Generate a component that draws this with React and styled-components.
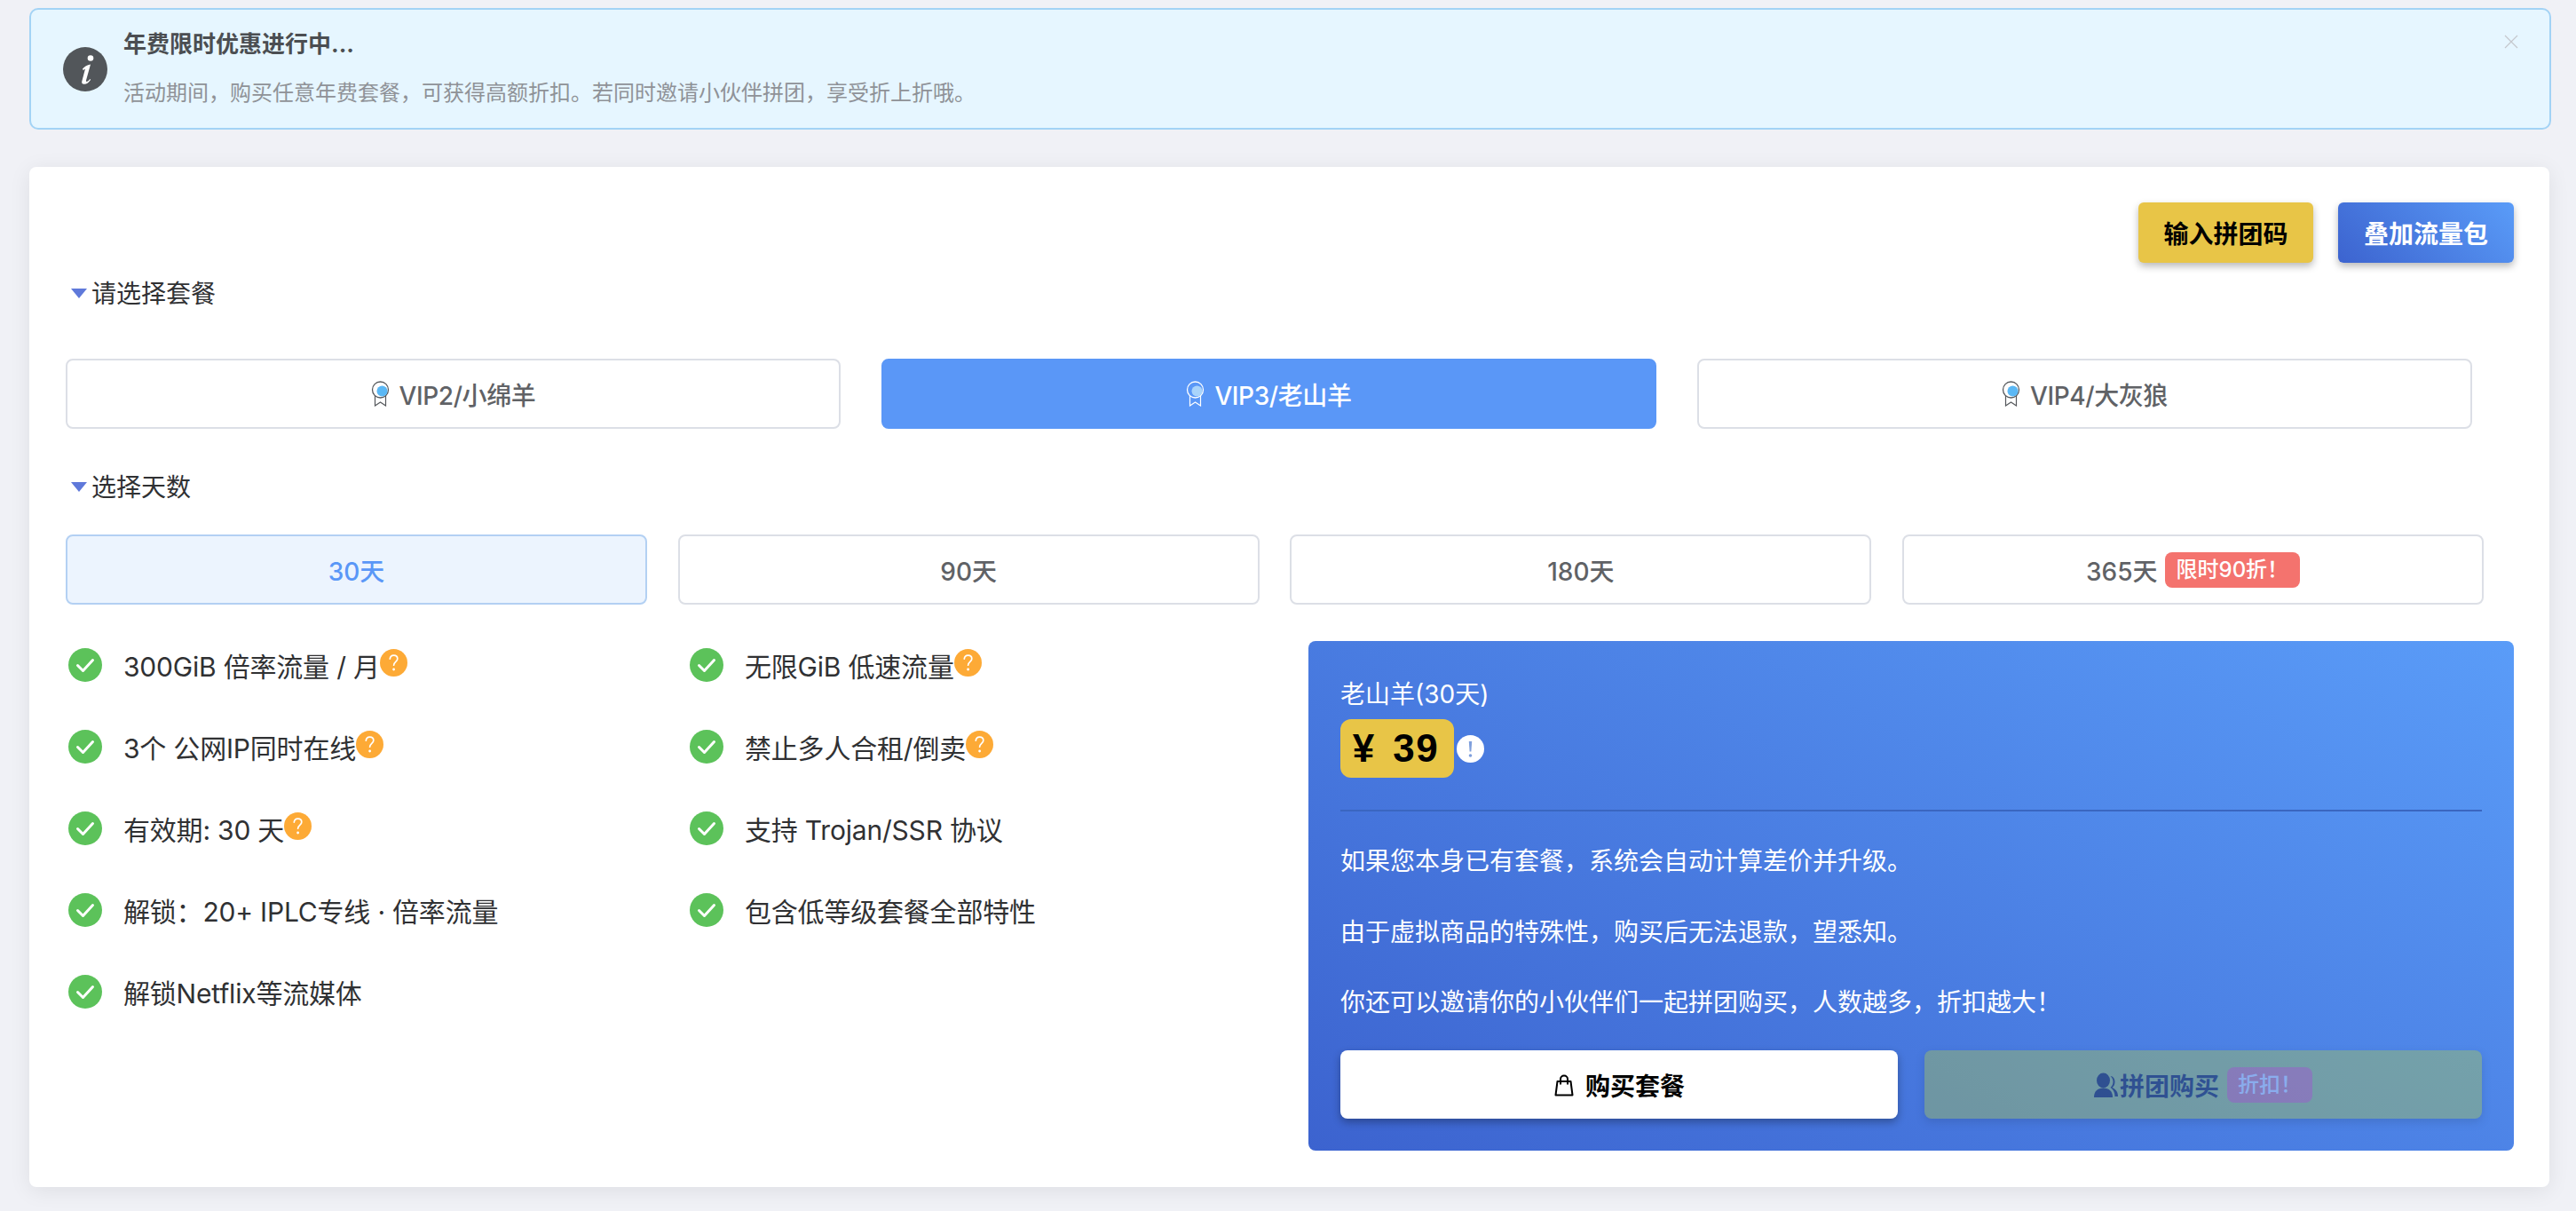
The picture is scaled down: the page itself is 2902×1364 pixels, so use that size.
import React from "react";
import styled, { createGlobalStyle } from "styled-components";

const Global = createGlobalStyle`
  html, body { margin: 0; padding: 0; background: #f0f1f6; }
  body { font-family: Inter, "Noto Sans CJK SC", sans-serif; color: #303133; }
  * { box-sizing: border-box; }
`;

const Page = styled.div`
  width: 2902px;
  height: 1364px;
  padding: 9px 28px 27px 33px;
  overflow: hidden;
`;

const Alert = styled.div`
  display: flex;
  align-items: center;
  gap: 18px;
  height: 137px;
  padding: 0 36px;
  background: #e6f6ff;
  border: 2px solid #a3d3f5;
  border-radius: 10px;
  position: relative;
`;

const AlertBody = styled.div`
  display: flex;
  flex-direction: column;
  gap: 19px;
`;

const AlertTitle = styled.div`
  font-size: 26px;
  line-height: 36px;
  font-weight: 700;
  color: #4b4e52;
`;

const AlertText = styled.div`
  font-size: 24px;
  line-height: 36px;
  color: #8f9297;
`;

const Close = styled.svg`
  position: absolute;
  right: 35px;
  top: 28px;
  width: 16px;
  height: 16px;
`;

const Card = styled.div`
  margin: 42px 2px 0 0;
  height: 1149px;
  padding: 40px 40px 41px 41px;
  background: #fff;
  border-radius: 8px;
  box-shadow: 0 4px 24px rgba(0, 0, 0, 0.08);
`;

const Actions = styled.div`
  display: flex;
  justify-content: flex-end;
  gap: 28px;
`;

const ActionButton = styled.button`
  height: 68px;
  width: ${(p) => p.$w}px;
  border: 0;
  border-radius: 6px;
  font: 700 28px Inter, "Noto Sans CJK SC", sans-serif;
  color: ${(p) => (p.$blue ? "#fff" : "#000")};
  background: ${(p) =>
    p.$blue ? "linear-gradient(45deg, #3c63cf, #5a9cf8)" : "#e8c547"};
  box-shadow: 0 4px 8px rgba(0, 0, 0, 0.28);
`;

const Heading = styled.div`
  display: flex;
  align-items: center;
  height: 40px;
  margin-top: ${(p) => p.$top}px;
  font-size: 28px;
  color: #303133;
`;

const Triangle = styled.span`
  width: 0;
  height: 0;
  margin: 3px 5px 0 6px;
  border-left: 9px solid transparent;
  border-right: 9px solid transparent;
  border-top: 11px solid #5f79da;
`;

const PlanRow = styled.div`
  display: grid;
  grid-template-columns: repeat(3, 873px);
  column-gap: 46px;
  margin-top: 55px;
`;

const DayRow = styled.div`
  display: grid;
  grid-template-columns: repeat(4, 655px);
  column-gap: 34.7px;
  margin-top: 35px;
`;

const Choice = styled.div`
  display: flex;
  align-items: center;
  justify-content: center;
  height: 79px;
  font-size: 28px;
  font-weight: 500;
  border-radius: 8px;
  border: 2px solid transparent;
  ${(p) =>
    p.$state === "solid"
      ? "background:#5a97f7;color:#fff;border-color:#5a97f7;"
      : p.$state === "soft"
      ? "background:#ecf4fe;color:#5a97f7;border-color:#b3d0f3;"
      : "background:#fff;color:#606266;border-color:#dcdfe6;"}
`;

const PlanLabel = styled.span`
  letter-spacing: -0.4px;
`;

const Medal = styled.svg`
  width: 22px;
  height: 29px;
  margin-right: 10px;
`;

const DayBadge = styled.span`
  display: inline-block;
  height: 40px;
  line-height: 40px;
  margin-left: 8px;
  padding: 0 13px;
  border-radius: 8px;
  background: #f4736e;
  color: #fff;
  font-size: 24px;
  font-weight: 500;
`;

const Lower = styled.div`
  display: flex;
  align-items: flex-start;
  margin-top: 41px;
`;

const Features = styled.div`
  display: grid;
  grid-template-columns: 700px 697px;
  width: 1400px;
  padding-left: 3px;
`;

const FeatureColumn = styled.div`
  display: flex;
  flex-direction: column;
  gap: 38px;
`;

const Feature = styled.div`
  display: flex;
  align-items: center;
  height: 54px;
  font-size: 30px;
  color: #303133;
  letter-spacing: -0.2px;
`;

const CheckIcon = styled.svg`
  width: 38px;
  height: 38px;
  margin-right: 24px;
  flex: none;
`;

const Hint = styled.svg`
  width: 31px;
  height: 31px;
  flex: none;
  transform: translateY(-3px);
`;

const PricePanel = styled.div`
  width: 1358px;
  height: 574px;
  padding: 40px 36px 36px;
  border-radius: 8px;
  color: #fff;
  background: linear-gradient(30deg, #3c63cf, #5a9cf8);
`;

const PanelTitle = styled.div`
  font-size: 28px;
  line-height: 40px;
`;

const PriceLine = styled.div`
  display: flex;
  align-items: center;
  gap: 3px;
  margin-top: 8px;
`;

const PriceBox = styled.div`
  display: flex;
  align-items: center;
  justify-content: center;
  width: 128px;
  height: 66px;
  padding-right: 3px;
  border-radius: 12px;
  background: #e8c547;
  color: #000;
  font-family: "Liberation Sans", sans-serif;
  font-size: 44px;
  font-weight: 700;
  letter-spacing: 1.5px;
  word-spacing: 6px;
  white-space: pre;
`;

const Divider = styled.div`
  height: 2px;
  margin-top: 36px;
  background: #3a66c0;
`;

const Note = styled.p`
  margin: ${(p) => p.$top}px 0 0;
  font-size: 28px;
  line-height: 40px;
`;

const BuyRow = styled.div`
  display: grid;
  grid-template-columns: 628px 628px;
  column-gap: 30px;
  margin-top: 34px;
`;

const BuyButton = styled.button`
  display: flex;
  align-items: center;
  justify-content: center;
  height: 77px;
  border: 0;
  border-radius: 8px;
  font: 700 28px Inter, "Noto Sans CJK SC", sans-serif;
  color: #000;
  background: ${(p) => (p.$group ? "#bad239" : "#fff")};
  opacity: ${(p) => (p.$group ? 0.35 : 1)};
  box-shadow: 0 4px 10px rgba(0, 0, 0, 0.3);
`;

const BuyBadge = styled.span`
  display: inline-block;
  height: 40px;
  line-height: 40px;
  margin-left: 9px;
  padding: 0 12px;
  border-radius: 8px;
  background: #f4736e;
  color: #fff;
  font-size: 24px;
  font-weight: 500;
`;

const BagIcon = styled.svg`
  width: 24px;
  height: 26px;
  margin-right: 12px;
`;

const PersonIcon = styled.svg`
  width: 28px;
  height: 28px;
  margin-right: 1px;
`;

const InfoIcon = () => (
  <svg width="50" height="50" viewBox="0 0 50 50" style={{ flex: "none" }}>
    <circle cx="25" cy="25" r="25" fill="#52565a" />
    <circle cx="31" cy="12.5" r="3.3" fill="#fff" />
    <path
      d="M22 24.500c2.500-2.600 5-4.500 9-5l-5 18c-.3 1.400.6 1.800 1.800 1 .9-.6 1.700-1.500 2.500-2.500l.9.8c-2 3-4.400 5-7.400 5-2.200 0-3-1.300-2.500-3.300l3.700-14c-.8.3-1.500.9-2.200 1.700z"
      fill="#fff"
    />
  </svg>
);

const MedalIcon = ({ light }) => {
  const line = light ? "#fff" : "#55585c";
  return (
    <Medal viewBox="0 0 22 29">
      <path
        d="M4.500 16v12l6-4 6 4V16"
        fill={light ? "none" : "#fff"}
        stroke={line}
        strokeWidth="1.2"
      />
      <circle cx="10.500" cy="10" r="9" fill={light ? "#5a97f7" : "#fff"} stroke={line} strokeWidth="1.300" />
      <circle cx="12.500" cy="11.500" r="6" fill={light ? "#a9d4fb" : "#5bb8f5"} />
    </Medal>
  );
};

const Check = () => (
  <CheckIcon viewBox="0 0 38 38">
    <circle cx="19" cy="19" r="19" fill="#5cc25a" />
    <path d="M10.500 19.500l6 6 11-12" fill="none" stroke="#fff" strokeWidth="3" strokeLinecap="round" strokeLinejoin="round" />
  </CheckIcon>
);

const Question = () => (
  <Hint viewBox="0 0 31 31">
    <circle cx="15.500" cy="15.500" r="15.500" fill="#fdaa36" />
    <path d="M11.300 11.200c.3-2.600 2-4 4.300-4 2.500 0 4.200 1.600 4.200 3.800 0 3.300-4.200 3.500-4.200 7.200" fill="none" stroke="#fff" strokeWidth="1.700" strokeLinecap="round" />
    <circle cx="15.600" cy="23" r="1.400" fill="#fff" />
  </Hint>
);

const Exclaim = () => (
  <svg width="31" height="31" viewBox="0 0 31 31" style={{ flex: "none" }}>
    <circle cx="15.500" cy="15.500" r="15.500" fill="#fff" />
    <path d="M13.800 7h3.400l-.8 11.500h-1.800z" fill="#7f9fdc" />
    <circle cx="15.500" cy="23" r="1.800" fill="#7f9fdc" />
  </svg>
);

const leftFeatures = [
  ["300GiB 倍率流量 / 月", true],
  ["3个 公网IP同时在线", true],
  ["有效期: 30 天", true],
  ["解锁：20+ IPLC专线 · 倍率流量", false],
  ["解锁Netflix等流媒体", false],
];

const rightFeatures = [
  ["无限GiB 低速流量", true],
  ["禁止多人合租/倒卖", true],
  ["支持 Trojan/SSR 协议", false],
  ["包含低等级套餐全部特性", false],
];

const FeatureList = ({ items }) => (
  <FeatureColumn>
    {items.map(([label, hint]) => (
      <Feature key={label}>
        <Check />
        {label}
        {hint && <Question />}
      </Feature>
    ))}
  </FeatureColumn>
);

export default function App() {
  return (
    <Page>
      <Global />
      <Alert>
        <InfoIcon />
        <AlertBody>
          <AlertTitle>年费限时优惠进行中...</AlertTitle>
          <AlertText>活动期间，购买任意年费套餐，可获得高额折扣。若同时邀请小伙伴拼团，享受折上折哦。</AlertText>
        </AlertBody>
        <Close viewBox="0 0 16 16">
          <path d="M1 1l14 14M15 1L1 15" stroke="#c4c7cc" strokeWidth="1.2" />
        </Close>
      </Alert>

      <Card>
        <Actions>
          <ActionButton $w={197}>输入拼团码</ActionButton>
          <ActionButton $w={198} $blue>叠加流量包</ActionButton>
        </Actions>

        <Heading $top={13}><Triangle />请选择套餐</Heading>
        <PlanRow>
          <Choice><MedalIcon /><PlanLabel>VIP2/小绵羊</PlanLabel></Choice>
          <Choice $state="solid"><MedalIcon light /><PlanLabel>VIP3/老山羊</PlanLabel></Choice>
          <Choice><MedalIcon /><PlanLabel>VIP4/大灰狼</PlanLabel></Choice>
        </PlanRow>

        <Heading $top={44}><Triangle />选择天数</Heading>
        <DayRow>
          <Choice $state="soft">30天</Choice>
          <Choice>90天</Choice>
          <Choice>180天</Choice>
          <Choice>365天<DayBadge>限时90折！</DayBadge></Choice>
        </DayRow>

        <Lower>
          <Features>
            <FeatureList items={leftFeatures} />
            <FeatureList items={rightFeatures} />
          </Features>
          <PricePanel>
            <PanelTitle>老山羊(30天)</PanelTitle>
            <PriceLine>
              <PriceBox>¥ 39</PriceBox>
              <Exclaim />
            </PriceLine>
            <Divider />
            <Note $top={36}>如果您本身已有套餐，系统会自动计算差价并升级。</Note>
            <Note $top={40}>由于虚拟商品的特殊性，购买后无法退款，望悉知。</Note>
            <Note $top={39}>你还可以邀请你的小伙伴们一起拼团购买，人数越多，折扣越大！</Note>
            <BuyRow>
              <BuyButton>
                <BagIcon viewBox="0 0 24 26">
                  <path d="M4.500 9h15l2 15.500h-19z" fill="none" stroke="#000" strokeWidth="2" strokeLinejoin="round" />
                  <path d="M8 12.500V6.500a4 4 0 0 1 8 0v6" fill="none" stroke="#000" strokeWidth="2" />
                </BagIcon>
                购买套餐
              </BuyButton>
              <BuyButton $group>
                <PersonIcon viewBox="0 0 28 28">
                  <ellipse cx="10.500" cy="9" rx="7.500" ry="8.500" fill="#000" />
                  <path d="M0 28c0-7 4-10.500 10.500-10.500S21 21 21 28z" fill="#000" />
                  <path d="M18.500 4c3 0 5 3 5 6.500s-1.500 5.500-3 6.500c3 1.500 6.500 4 6.500 10h-3.500c0-5-2-8-5-10 2-2 3-4 3-6.500s-1-4.500-3-6.500z" fill="#000" />
                </PersonIcon>
                拼团购买
                <BuyBadge>折扣！</BuyBadge>
              </BuyButton>
            </BuyRow>
          </PricePanel>
        </Lower>
      </Card>
    </Page>
  );
}
